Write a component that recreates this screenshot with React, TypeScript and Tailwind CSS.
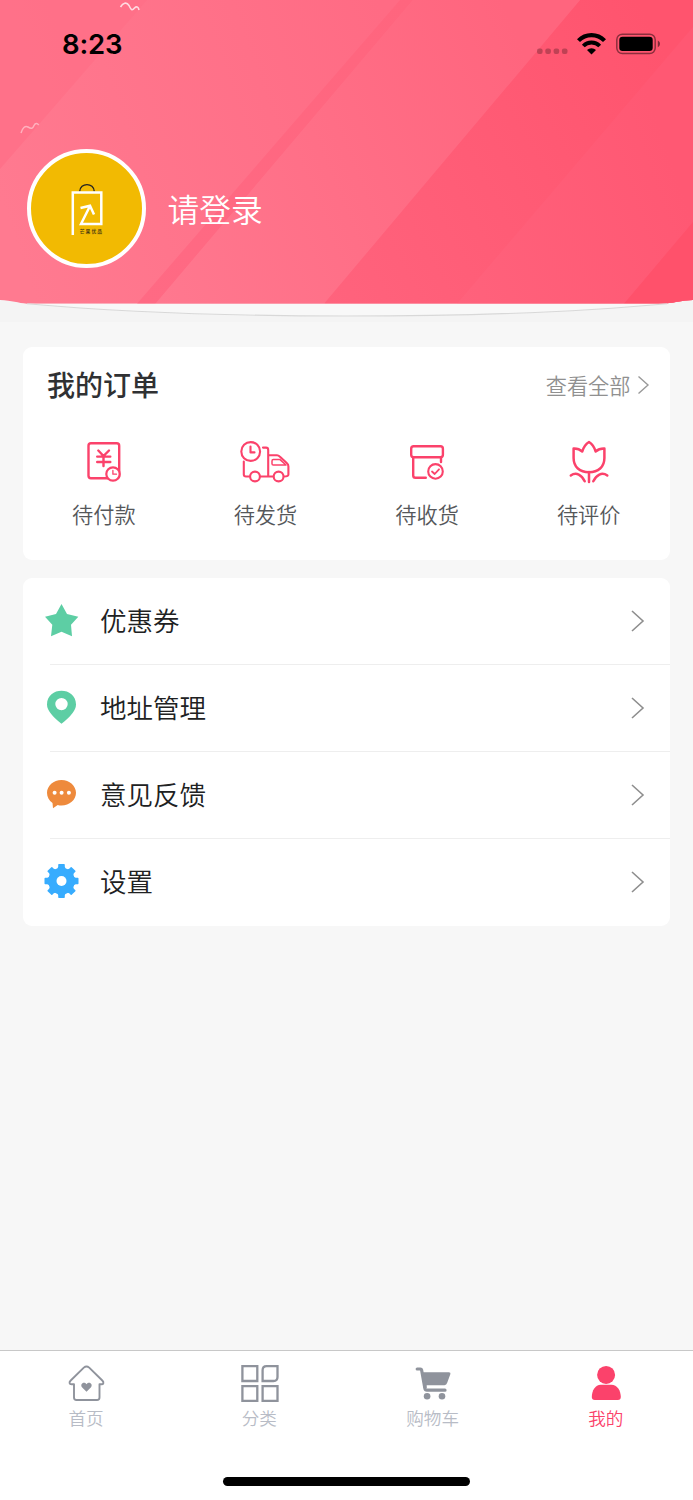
import type { ReactNode } from "react";

const GEAR_ANGLES = [0, 45, 90, 135, 180, 225, 270, 315];

function HeaderBackdrop() {
  return (
    <svg className="absolute inset-0 h-full w-full" viewBox="0 0 693 322" fill="none" aria-hidden="true">
      <defs>
        <linearGradient id="base" gradientUnits="userSpaceOnUse" x1="0" y1="200" x2="400" y2="60">
          <stop offset="0" stopColor="#ff7a90" />
          <stop offset="1" stopColor="#ff6b84" />
        </linearGradient>
        <linearGradient id="band" gradientUnits="userSpaceOnUse" x1="140" y1="303" x2="410" y2="0">
          <stop offset="0" stopColor="#ff6a84" />
          <stop offset="1" stopColor="#ff657e" />
        </linearGradient>
        <linearGradient id="middle" gradientUnits="userSpaceOnUse" x1="160" y1="303" x2="560" y2="140">
          <stop offset="0" stopColor="#ff788f" />
          <stop offset="1" stopColor="#ff657e" />
        </linearGradient>
        <linearGradient id="right" gradientUnits="userSpaceOnUse" x1="324" y1="303" x2="693" y2="100">
          <stop offset="0" stopColor="#ff637d" />
          <stop offset="1" stopColor="#ff546e" />
        </linearGradient>
        <linearGradient id="edge" gradientUnits="userSpaceOnUse" x1="457" y1="303" x2="693" y2="220">
          <stop offset="0" stopColor="#ff627c" />
          <stop offset="1" stopColor="#ff5873" />
        </linearGradient>
      </defs>
      <path d="M0 0H693V322H0Z" fill="#f4f4f4" />
      <path d="M0 0H693V300C681 300 674 303.7 660 303.7H27C18 303 12 300.5 0 300Z" fill="url(#base)" />
      <path d="M0 0H147L0 169Z" fill="#ff6f87" fillOpacity=".75" />
      <path d="M400 0H413L155.5 303.7H137Z" fill="url(#band)" />
      <path d="M413 0H580L324 303.7H155.5Z" fill="url(#middle)" />
      <path d="M580 0H693V300C681 300 674 303.7 660 303.7H324Z" fill="url(#right)" />
      <path d="M693 27V300C681 300 674 303.7 660 303.7H457Z" fill="url(#edge)" />
      <path d="M693 222V300C681 300 674 303 660 303.7H624Z" fill="#ff516b" />
      <path d="M27 303.7C110 311 200 316.500 346 316.500S590 311 667 303.7Z" fill="#f8f8f8" />
      <path d="M27 303.7C110 311 200 316 346 316S590 311 667 303.7" stroke="#d8d8d8" strokeWidth="1.1" />
      <path d="M120.5 7C123 3 126.500 1.500 129 5.500C131.500 11 132.500 10.500 134.500 8C137 5.500 138.500 7.500 139 10" stroke="#fff" strokeOpacity=".75" strokeWidth="1.6" />
      <path d="M21 133C22.500 128 25 125.500 28 127C32 129.500 33 128 34 125.500C35.500 122.500 37.500 123.500 38.700 125" stroke="#fff" strokeOpacity=".45" strokeWidth="1.5" />
    </svg>
  );
}

function StatusIcons() {
  return (
    <svg className="h-[28px] w-[128px]" viewBox="535 30 128 28" fill="none">
      <g fill="#000" fillOpacity=".25">
        <rect x="537" y="48.500" width="5.600" height="5.600" rx="2" />
        <rect x="545.300" y="48.500" width="5.600" height="5.600" rx="2" />
        <rect x="553.600" y="48.500" width="5.600" height="5.600" rx="2" />
        <rect x="561.900" y="48.500" width="5.600" height="5.600" rx="2" />
      </g>
      <path d="M578.500 40.600A18.200 18.200 0 0 1 604.500 40.600" stroke="#000" strokeWidth="4.200" />
      <path d="M583.300 46A11.500 11.500 0 0 1 599.700 46" stroke="#000" strokeWidth="3.900" />
      <path d="M587 50A6.500 6.500 0 0 1 596 50L591.500 54.400Z" fill="#000" />
      <rect x="616.800" y="34.200" width="38.400" height="19.400" rx="5.500" stroke="#000" strokeOpacity=".45" strokeWidth="1.500" />
      <rect x="619.300" y="36.700" width="33.400" height="14.400" rx="3.300" fill="#000" />
      <path d="M657.800 40.600C660.700 42 660.700 45.800 657.800 47.200Z" fill="#000" fillOpacity=".5" />
    </svg>
  );
}

function Avatar() {
  return (
    <div className="h-[119px] w-[119px] shrink-0 overflow-hidden rounded-full border-4 border-white bg-[#f2ba02]">
      <svg className="h-[111px] w-[111px]" viewBox="31 153 111 111" fill="none">
        <path d="M79.700 191.500C80 182.200 94 182.200 94.300 191.500" stroke="#222" strokeWidth="1.300" />
        <path d="M72.800 235V192.400H101.300V224H81L90 206M80.500 208L90 205.700L94 214.500" stroke="#fff" strokeWidth="2.500" />
        <text x="79.800" y="233" fill="#3d3210" fontSize="4.800" fontWeight="500" letterSpacing="1" fontFamily="'Noto Sans CJK SC', sans-serif">芒果优品</text>
      </svg>
    </div>
  );
}

function PayIcon() {
  return (
    <svg className="h-[50px] w-[56px]" viewBox="75.500 437 56 50" fill="none" stroke="#fb426b" strokeWidth="2.400" strokeLinecap="round" strokeLinejoin="round">
      <rect x="88" y="443.200" width="30.700" height="35" rx="2.500" />
      <path d="M97.800 450.500L103 456L108.500 450.500M103 456V466M96.700 456.600H109.800M96.700 462H109.800" />
      <circle cx="112.500" cy="474" r="6.700" fill="#fff" strokeWidth="2.200" />
      <path d="M112.400 470.500V474.200H116" strokeWidth="1.300" />
    </svg>
  );
}

function TruckIcon() {
  return (
    <svg className="h-[50px] w-[56px]" viewBox="237 437 56 50" fill="none" stroke="#fb426b" strokeWidth="2.100" strokeLinecap="round" strokeLinejoin="round">
      <circle cx="250.700" cy="451.500" r="9.400" />
      <path d="M250.500 446.500V452.400H254.500M243.800 461.500V474.500Q243.800 476.500 246 476.500H249.500M263 447.600H266Q268.200 447.600 268.200 450V476.500M260.500 476.500H273M268.200 455.200H277Q278.500 455.200 279.700 456.400L287 463.300Q288.400 464.500 288.400 466.500V474.500Q288.400 476.500 284 476.500" />
      <path d="M273.300 459.600H280L286 465H273.300Q272 465 272 463.700V461Q272 459.600 273.300 459.600Z" strokeWidth="1.500" />
      <circle cx="255" cy="476.500" r="4.900" />
      <circle cx="278.600" cy="476.500" r="4.900" />
    </svg>
  );
}

function BoxIcon() {
  return (
    <svg className="h-[50px] w-[56px]" viewBox="399 437 56 50" fill="none" stroke="#fb426b" strokeWidth="2.400" strokeLinecap="round" strokeLinejoin="round">
      <rect x="411.200" y="446.200" width="31.700" height="11" rx="2.500" />
      <path d="M413.200 457.500V475.500Q413.200 477.800 415.500 477.800H425.800M441 457.500V462" />
      <circle cx="435.500" cy="471.400" r="7.300" strokeWidth="2.100" />
      <path d="M432 471.500L434.700 474L439 469.300" strokeWidth="1.800" />
    </svg>
  );
}

function TulipIcon() {
  return (
    <svg className="h-[50px] w-[56px]" viewBox="560.700 437 56 50" fill="none" stroke="#fb426b" strokeWidth="2.500" strokeLinecap="round" strokeLinejoin="round">
      <path d="M573.300 448.500V458C573.300 467 579.500 472.300 588.700 472.300S604.100 467 604.100 458V448.500Q599 448.300 595.300 451.500Q593.300 444.700 588.700 442Q584 444.700 582 451.500Q578.500 448.300 573.300 448.500ZM588.700 472V482M570.500 475.500C576 471.500 581.500 475 584.400 481.300M607 475.500C601.500 471.500 596 475 593 481.300" />
    </svg>
  );
}

function StarIcon() {
  return (
    <svg className="h-[40px] w-[40px]" viewBox="41 601 40 40">
      <path d="M61.500 604L67 613.900L78.300 616.700L71 624.700L72 636.200L61.500 631.700L51 636.200L52.300 624.700L45 616.700L56 613.900Z" fill="#5dcea4" />
    </svg>
  );
}

function PinIcon() {
  return (
    <svg className="h-[40px] w-[40px]" viewBox="41 688 40 40">
      <path fillRule="evenodd" d="M61.500 723.800Q47 712.500 47 704.500C47 686 76 686 76 704.500Q76 712.500 61.500 723.800ZM61.500 697.900A6.200 6.200 0 1 0 61.500 710.300A6.200 6.200 0 1 0 61.500 697.900Z" fill="#5dcea4" />
    </svg>
  );
}

function BubbleIcon() {
  return (
    <svg className="h-[40px] w-[40px]" viewBox="41 775 40 40">
      <path d="M61.500 779.900C69.500 779.900 76 785.700 76 792.800S69.500 805.500 61.500 805.500Q59.500 805.500 57.700 805L53 808.200L52.500 803C49 800.700 47 797 47 792.800C47 785.700 53.500 779.900 61.500 779.900Z" fill="#ee8a3c" />
      <g fill="#fff">
        <circle cx="54.600" cy="792.800" r="2" />
        <circle cx="61.600" cy="792.800" r="2" />
        <circle cx="68.900" cy="792.800" r="2" />
      </g>
    </svg>
  );
}

function GearIcon() {
  return (
    <svg className="h-[40px] w-[40px]" viewBox="-20.500 -19 40 40" fill="#37acfe">
      <circle r="13.300" />
      {GEAR_ANGLES.map((angle) => (
        <path key={angle} d="M-4.300 -12L-3.300 -14.200V-16.300Q-3.300 -17 -2.600 -17H2.600Q3.300 -17 3.300 -16.300V-14.200L4.300 -12Z" transform={`rotate(${angle})`} />
      ))}
      <circle r="5" fill="#fff" />
    </svg>
  );
}

function HomeIcon() {
  return (
    <svg className="h-[44px] w-[44px]" viewBox="65 1362 44 44" fill="none">
      <path d="M83.800 1367.600Q86.500 1365.300 89.200 1367.600L102.300 1380.500C104.200 1382.500 103.500 1384.300 101.500 1384.300H99.500V1397.500Q99.500 1400 97 1400H76.500Q74 1400 74 1397.500V1384.300H71.500C69.300 1384.300 68.800 1382.500 70.700 1380.500Z" stroke="#8f939c" strokeWidth="1.900" strokeLinejoin="round" />
      <path d="M86.500 1391.700L82.200 1387.500C79.400 1384.300 83.800 1380.500 86.500 1384.200C89.200 1380.500 93.600 1384.300 90.800 1387.500Z" fill="#8f939c" />
    </svg>
  );
}

function GridIcon() {
  return (
    <svg className="h-[44px] w-[44px]" viewBox="238.300 1362 44 44" fill="none" stroke="#8f939c" strokeWidth="2.300">
      <path d="M242.700 1366.200H257.600V1381H242.700ZM242.700 1386.100H257.600V1400.900H242.700ZM262.900 1386.100H277.800V1400.900H262.900ZM266.900 1366.200H277.800V1377Q277.800 1381 273.800 1381H262.900V1370.200Q262.900 1366.200 266.900 1366.200Z" />
    </svg>
  );
}

function CartIcon() {
  return (
    <svg className="h-[44px] w-[44px]" viewBox="411.300 1362 44 44" fill="#8f939c">
      <path d="M417.500 1369H420.700Q421.700 1369 421.900 1370L425.200 1388.500Q425.500 1390.200 427.200 1390.200H445.300" fill="none" stroke="#8f939c" strokeWidth="3.200" strokeLinecap="round" />
      <path d="M422 1372.300H449.200Q451.200 1372.300 450.700 1374L447.500 1382.800Q446.800 1385.200 444.800 1385.200H427L427 1388H424Z" />
      <circle cx="427.400" cy="1396.200" r="3.300" />
      <circle cx="442.300" cy="1396.200" r="3.300" />
    </svg>
  );
}

function PersonIcon() {
  return (
    <svg className="h-[44px] w-[44px]" viewBox="584.400 1362 44 44" fill="#fb426b">
      <circle cx="606.500" cy="1374.900" r="9" />
      <path d="M601.200 1384.700H611.700C617.700 1384.700 621.200 1390.500 621.200 1397Q621.200 1400 618.200 1400H595.200Q592.200 1400 592.200 1397C592.200 1390.500 595.700 1384.700 601.200 1384.700Z" />
    </svg>
  );
}

function Chevron() {
  return (
    <svg className="h-[24px] w-[16px]" viewBox="0 0 16 24" fill="none" stroke="#8e8e8e" strokeWidth="1.600">
      <path d="M2 2L13 12L2 22" />
    </svg>
  );
}

const orders: { label: string; icon: ReactNode }[] = [
  { label: "待付款", icon: <PayIcon /> },
  { label: "待发货", icon: <TruckIcon /> },
  { label: "待收货", icon: <BoxIcon /> },
  { label: "待评价", icon: <TulipIcon /> },
];

const menu: { label: string; icon: ReactNode }[] = [
  { label: "优惠券", icon: <StarIcon /> },
  { label: "地址管理", icon: <PinIcon /> },
  { label: "意见反馈", icon: <BubbleIcon /> },
  { label: "设置", icon: <GearIcon /> },
];

const tabs: { label: string; icon: ReactNode; active?: boolean }[] = [
  { label: "首页", icon: <HomeIcon /> },
  { label: "分类", icon: <GridIcon /> },
  { label: "购物车", icon: <CartIcon /> },
  { label: "我的", icon: <PersonIcon />, active: true },
];

export default function App() {
  return (
    <div className="flex h-[1500px] w-[693px] flex-col overflow-hidden bg-[#f7f7f7] font-['Noto_Sans_CJK_SC',sans-serif] font-[350]">
      <header className="relative h-[322px] shrink-0">
        <HeaderBackdrop />
        <div className="relative flex h-[88px] items-center justify-between pr-[30px] pl-[62px]">
          <span className="font-['Inter',sans-serif] text-[27.500px] leading-[28px] font-semibold tracking-[-0.2px] text-black">8:23</span>
          <StatusIcons />
        </div>
        <div className="relative mt-[61px] flex items-center gap-[21.500px] pl-[27px]">
          <Avatar />
          <span className="pb-[2px] text-[31.700px] leading-[40px] text-white">请登录</span>
        </div>
      </header>

      <main className="mt-[25px] flex flex-1 flex-col gap-[18px] pr-[23.500px] pl-[23px]">
        <section className="h-[213px] rounded-[9px] bg-white">
          <div className="flex h-[75px] items-center justify-between pr-[20px] pl-[24px]">
            <h2 className="pb-[2px] text-[28px] leading-[40px] font-medium text-[#303133]">我的订单</h2>
            <div className="flex items-center gap-[5px] text-[21.200px] leading-[30px] text-[#909090]">
              <span>查看全部</span>
              <svg className="h-[20px] w-[14px]" viewBox="0 0 14 20" fill="none" stroke="#999" strokeWidth="1.400">
                <path d="M2.500 1.500L12 10L2.500 18.500" />
              </svg>
            </div>
          </div>
          <div className="grid grid-cols-4 pt-[15px]">
            {orders.map((item) => (
              <div key={item.label} className="flex flex-col items-center">
                {item.icon}
                <span className="mt-[11.500px] text-[21.200px] leading-[30px] text-[#55575a]">{item.label}</span>
              </div>
            ))}
          </div>
        </section>

        <section className="h-[348px] rounded-[9px] bg-white">
          {menu.map((item, index) => (
            <div key={item.label}>
              {index > 0 && <div className="ml-[27px] h-px bg-[#eeeeee]" />}
              <div className="flex h-[86px] items-center pr-[24px] pl-[18px]">
                {item.icon}
                <span className="ml-[19px] flex-1 pb-[3px] text-[26.500px] leading-[40px] text-[#202122]">{item.label}</span>
                <Chevron />
              </div>
            </div>
          ))}
        </section>
      </main>

      <footer className="flex h-[150px] shrink-0 flex-col items-center border-t border-[#c8c8c8] bg-white">
        <nav className="grid w-full grid-cols-4 pt-[11px]">
          {tabs.map((tab) => (
            <div key={tab.label} className={`flex flex-col items-center text-[17.600px] leading-[24px] ${tab.active ? "text-[#fb426b]" : "text-[#b8bcc6]"}`}>
              {tab.icon}
              <span className="mt-[-0.500px] pr-px">{tab.label}</span>
            </div>
          ))}
        </nav>
        <div className="mt-[47px] h-[9px] w-[247px] rounded-full bg-black" />
      </footer>
    </div>
  );
}
